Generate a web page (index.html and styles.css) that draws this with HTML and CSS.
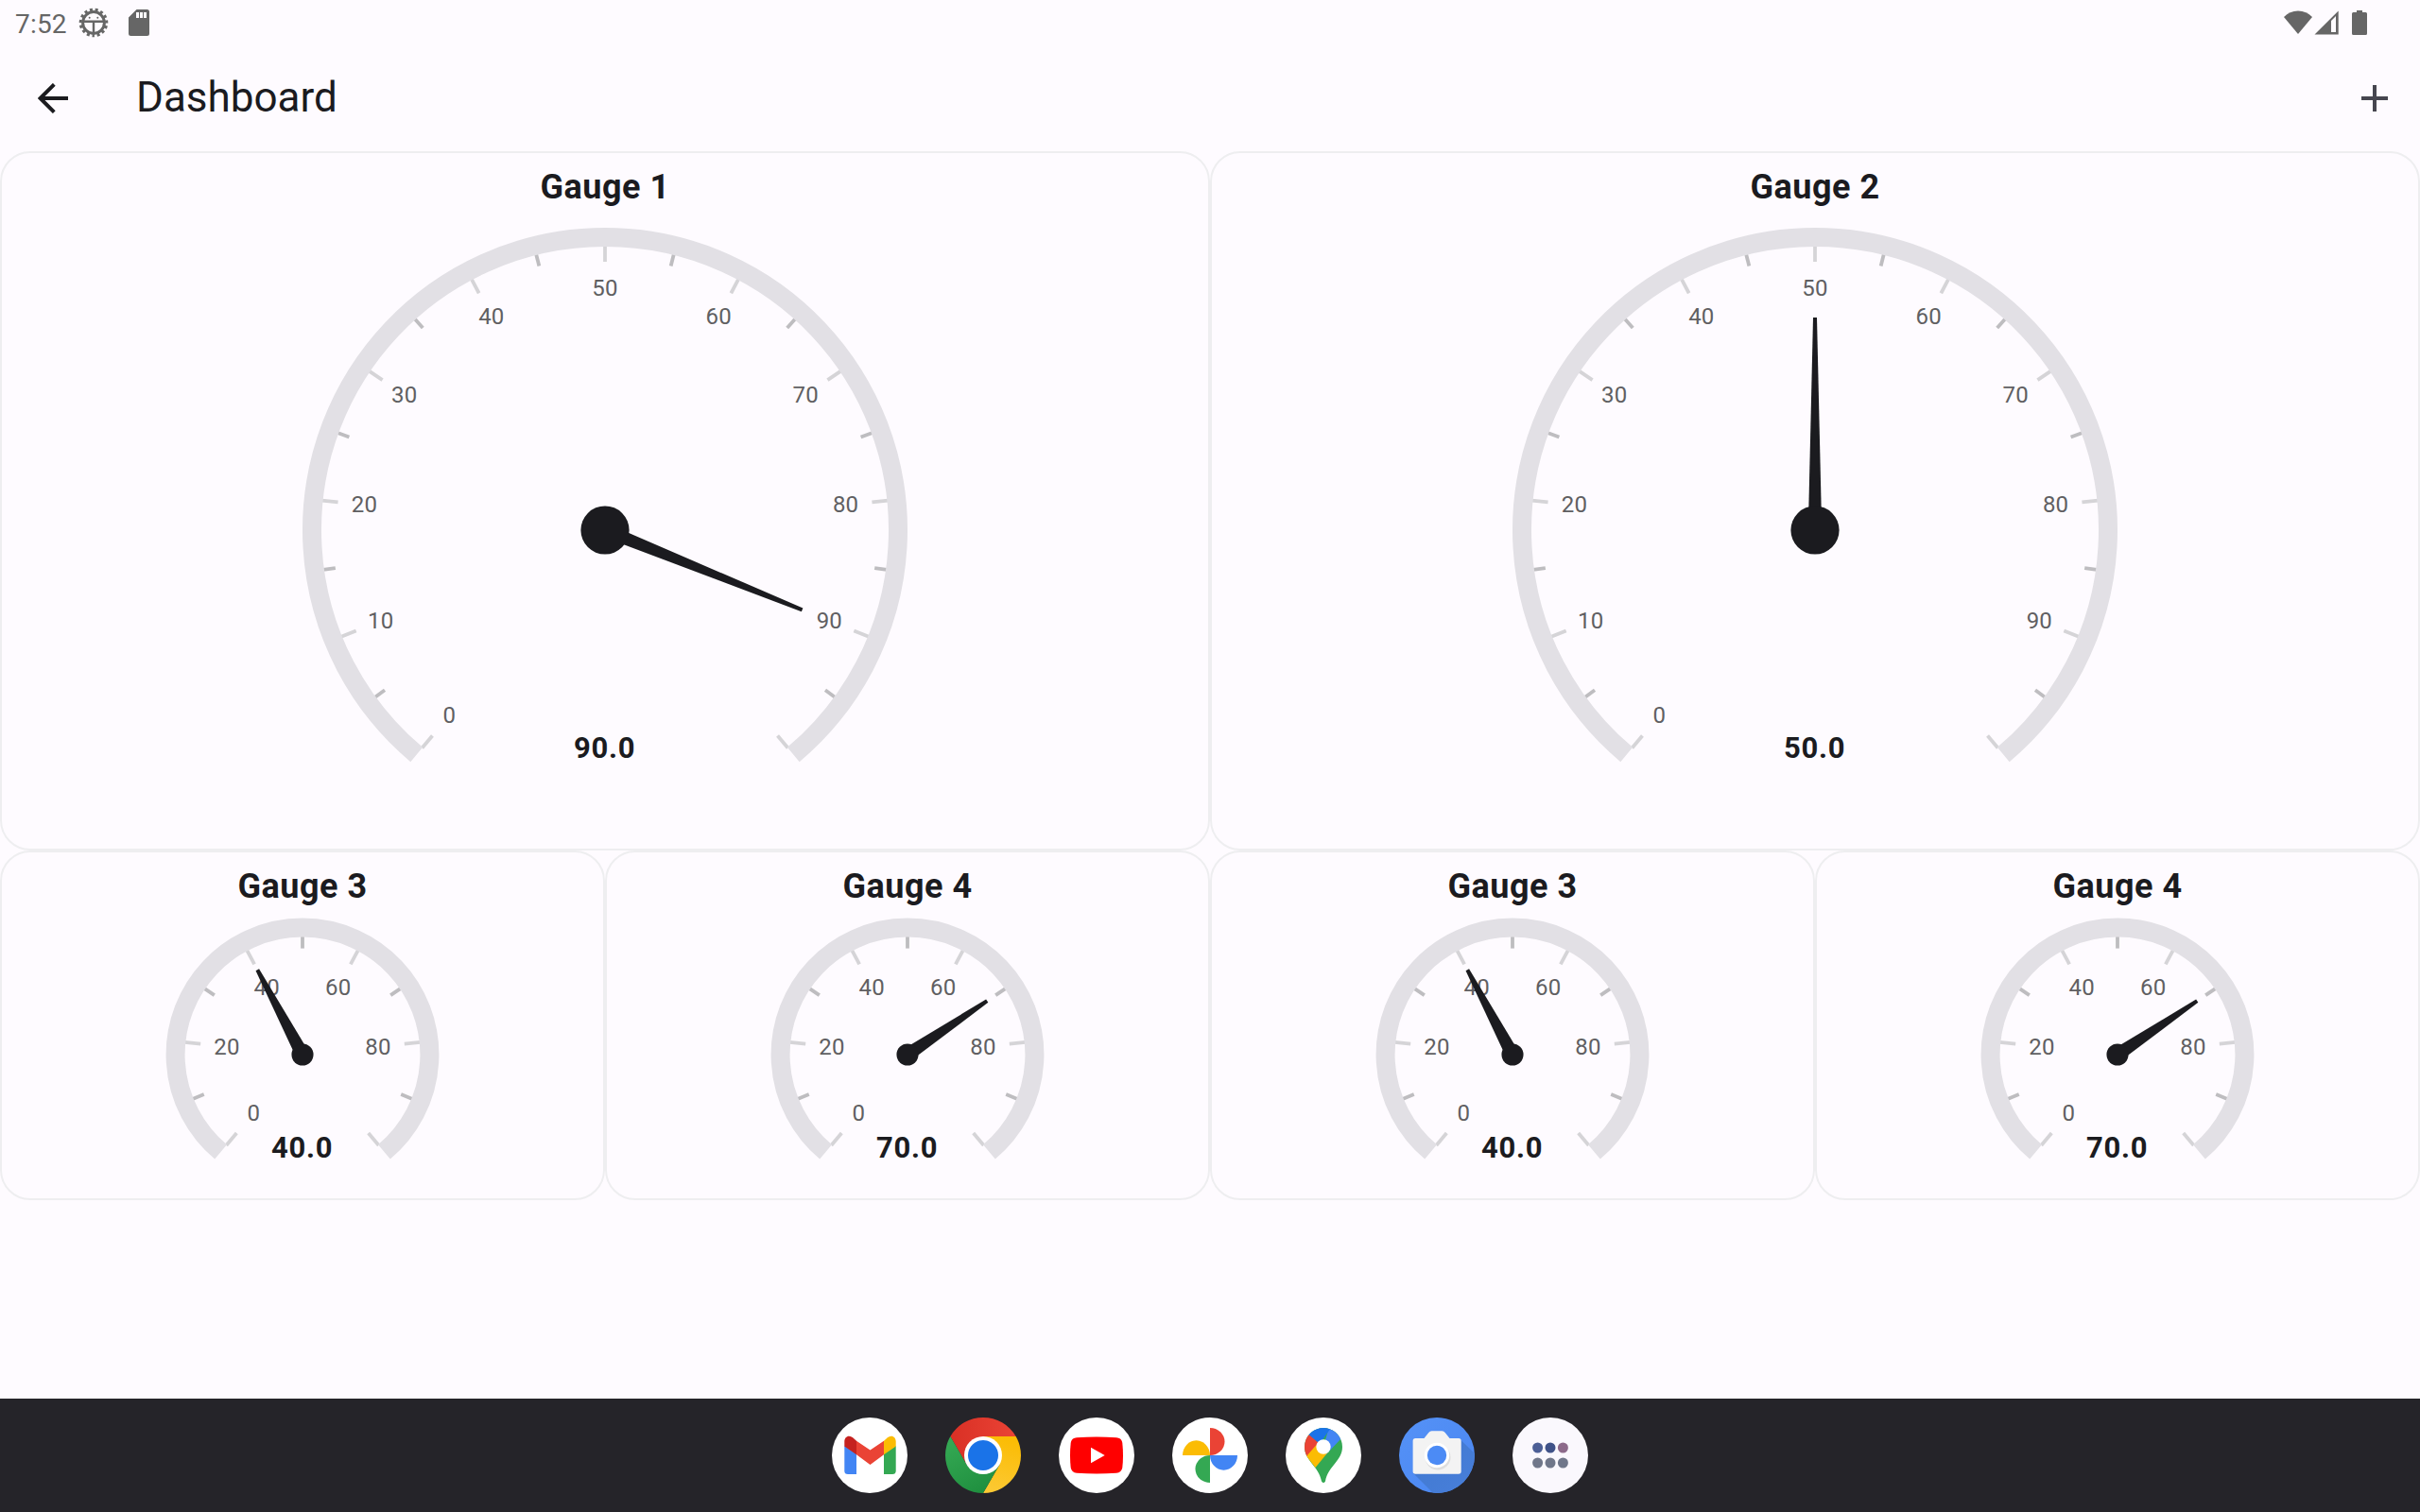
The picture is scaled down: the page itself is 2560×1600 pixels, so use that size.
FILE: index.html
```
<!DOCTYPE html>
<html lang="en">
<head>
<meta charset="utf-8">
<title>Dashboard</title>
<link rel="stylesheet" href="styles.css">
</head>
<body>
<header class="status">
  <span class="clock">7:52</span>
  <svg class="bug" width="32" height="32" viewBox="-16 -16 32 32">
    <circle r="11.4" fill="none" stroke="#666" stroke-width="3"/>
    <circle r="13.800" fill="none" stroke="#666" stroke-width="3" stroke-dasharray="3 2.781" stroke-dashoffset="1.5" transform="rotate(90)"/>
    <path d="M-11-1.200H11M0-1V11" stroke="#666" stroke-width="2.400"/>
    <circle cx="-4.300" cy="-5.300" r="1" fill="#666"/><circle cx="4.300" cy="-5.300" r="1" fill="#666"/>
  </svg>
  <svg class="sd" width="22" height="28" viewBox="0 0 22 28"><path fill="#666" fill-rule="evenodd" d="M8.500 0H19.500A2.500 2.500 0 0 1 22 2.500V25.500A2.500 2.500 0 0 1 19.500 28H2.500A2.500 2.500 0 0 1 0 25.500V8.500ZM8 3V9H11V3ZM12 3V9H15V3ZM16 3V9H19V3Z"/></svg>
  <div class="signals">
    <svg width="30" height="26" viewBox="0 0 30 26"><path fill="#666" d="M0 7Q6 .5 15 .5T30 7L15 25Z"/></svg>
    <svg class="cell" width="26" height="26" viewBox="0 0 26 26"><path fill="#666" fill-rule="evenodd" d="M.5 25.500L25.700.500V25.500ZM18 11V23H23V6Z"/></svg>
    <svg class="battery" width="16" height="26" viewBox="0 0 16 26"><path fill="#666" d="M5 0H11V2H14.500Q16 2 16 3.500V24.500Q16 26 14.500 26H1.500Q0 26 0 24.500V3.500Q0 2 1.500 2H5Z"/></svg>
  </div>
</header>
<nav class="appbar">
  <svg width="32" height="32" viewBox="0 0 32 32"><path fill="none" stroke="#1b1b1f" stroke-width="3.9" d="M32 16H3M17.300 1.300L2.600 16L17.300 30.700"/></svg>
  <h1>Dashboard</h1>
  <svg class="add" width="28" height="28" viewBox="0 0 28 28"><path stroke="#46464f" stroke-width="4" d="M0 14H28M14 0V28"/></svg>
</nav>
<main class="grid">
  <section class="card large" data-value="90"><h2>Gauge 1</h2></section>
  <section class="card large" data-value="50"><h2>Gauge 2</h2></section>
  <section class="card" data-value="40"><h2>Gauge 3</h2></section>
  <section class="card" data-value="70"><h2>Gauge 4</h2></section>
  <section class="card" data-value="40"><h2>Gauge 3</h2></section>
  <section class="card" data-value="70"><h2>Gauge 4</h2></section>
</main>
<footer class="taskbar">
  <svg viewBox="0 0 80 80"><circle cx="40" cy="40" r="40" fill="#fff"/>
    <path fill="#4285f4" d="M13.300 30L26 38V60H17Q13.300 60 13.300 56.500Z"/>
    <path fill="#34a853" d="M67.700 30L55 38V60H64Q67.700 60 67.700 56.500Z"/>
    <path fill="#ea4335" d="M26 24.800L40.500 34.500L55 24.800V39.300L40.500 50L26 39.300Z"/>
    <path fill="#c5221f" d="M26 24.800V39.300L13.300 30.500V25.500C13.300 19.500 19 17.500 23.500 22.500Z"/>
    <path fill="#fbbc04" d="M55 24.800V39.300L67.700 30.500V25.500C67.700 19.500 62 17.500 57.500 22.500Z"/></svg>
  <svg viewBox="0 0 80 80">
    <defs>
      <linearGradient id="red"><stop stop-color="#d93025"/><stop offset="1" stop-color="#ea4335"/></linearGradient>
      <linearGradient id="green" x1=".3" y1="0" x2=".8" y2="1"><stop stop-color="#34a853"/><stop offset="1" stop-color="#1e8e3e"/></linearGradient>
      <linearGradient id="yellow" x1=".5" y1="0" x2=".3" y2="1"><stop stop-color="#fbbc04"/><stop offset="1" stop-color="#fcc934"/></linearGradient>
    </defs>
    <path fill="url(#red)" d="M5.360 20A40 40 0 0 1 74.640 20L40 20L40 40L22.700 50Z"/>
    <path fill="url(#yellow)" d="M74.640 20A40 40 0 0 1 40 80L57.300 50L40 40V20Z"/>
    <path fill="url(#green)" d="M5.360 20A40 40 0 0 0 40 80L57.300 50L40 40L22.700 50Z"/>
    <circle cx="40" cy="40" r="20" fill="#fff"/><circle cx="40" cy="40" r="16" fill="#1a73e8"/></svg>
  <svg viewBox="0 0 80 80"><circle cx="40" cy="40" r="40" fill="#fff"/>
    <path fill="#f00" d="M19 21.300Q40 19.800 61 21.300Q66.500 21.700 67.300 27Q68.700 40 67.300 53Q66.500 58.300 61 58.800Q40 60.200 19 58.800Q13.500 58.300 12.700 53Q11.300 40 12.700 27Q13.500 21.700 19 21.300Z"/>
    <path fill="#fff" d="M34 31.700V48.300L48.700 40Z"/></svg>
  <svg viewBox="0 0 80 80"><circle cx="40" cy="40" r="40" fill="#fff"/>
    <path fill="#ea4335" d="M40 11A15.500 14.500 0 0 1 40 40Z"/>
    <path fill="#4285f4" d="M40 40H69A14.500 15.700 0 0 1 40 40Z"/>
    <path fill="#34a853" d="M40 40V69A15.500 14.500 0 0 1 40 40Z"/>
    <path fill="#fbbc04" d="M40 40H11A14.500 15.700 0 0 1 40 40Z"/></svg>
  <svg viewBox="0 0 80 80"><circle cx="40" cy="40" r="40" fill="#fff"/>
    <clipPath id="pin"><path d="M40 11C51 11 60 20 60 31C60 46 45 51 42 67.500Q40 70.500 38 67.500C35 51 20 46 20 31C20 20 29 11 40 11Z"/></clipPath>
    <g clip-path="url(#pin)"><rect width="80" height="80" fill="#34a853"/>
      <path fill="#4285f4" d="M46 10L40 31L42 40L60 21V8Z"/>
      <path fill="#1a73e8" d="M20 14L25 19L36 28L50 8H25Z"/>
      <path fill="#ea4335" d="M25 18.500L36 28L21.500 42H15V20Z"/>
      <path fill="#fbbc04" d="M22 41L36 25L45 36.500L31.500 53Z"/></g>
    <circle cx="40" cy="31" r="7.700" fill="#fff"/></svg>
  <svg viewBox="0 0 80 80">
    <defs><linearGradient id="cam" x2="1" y2="1"><stop stop-color="#5592f7"/><stop offset="1" stop-color="#4a86f0"/></linearGradient>
    <linearGradient id="shade" x2="1" y2="1"><stop stop-color="#4179cf"/><stop offset="1" stop-color="#487fdb"/></linearGradient></defs>
    <clipPath id="disc"><circle cx="40" cy="40" r="40"/></clipPath>
    <g clip-path="url(#disc)"><rect width="80" height="80" fill="url(#cam)"/><path fill="url(#shade)" d="M64.500 23L84 42V84H40L15 59L40 40Z"/></g>
    <path fill="#f3f3f3" d="M31.300 16Q32.600 14.300 34.500 14.300H45.500Q47.400 14.300 48.700 16L53.500 22H63Q65.700 22 65.700 24.700V57Q65.700 59.700 63 59.700H17.300Q14.600 59.700 14.600 57V24.700Q14.600 22 17.300 22H26.500Z"/>
    <circle cx="41" cy="42" r="13.500" fill="#dedede"/><circle cx="40" cy="40" r="13.200" fill="#fff"/><circle cx="40" cy="40" r="10.200" fill="#4c8bf5"/></svg>
  <svg viewBox="0 0 80 80"><circle cx="40" cy="40" r="40" fill="#faf8fd"/>
    <circle cx="26.600" cy="32" r="5.500" fill="#4c5f96"/><circle cx="40" cy="32" r="5.500" fill="#3f5288"/><circle cx="53.400" cy="32" r="5.500" fill="#8c6a8a"/>
    <g fill="#70778a"><circle cx="26.600" cy="48" r="5.500"/><circle cx="40" cy="48" r="5.500"/><circle cx="53.400" cy="48" r="5.500"/></g></svg>
</footer>
<script src="gauges.js"></script>
</body>
</html>
```
FILE: styles.css
```
* { box-sizing: border-box; }
body { margin: 0; width: 2560px; height: 1600px; display: flex; flex-direction: column; overflow: hidden; background: #fefbff; color: #1b1b1f; font-family: Roboto, sans-serif; }
svg { display: block; flex: none; }
.status { height: 50px; display: flex; align-items: center; padding: 0 56px 2px 16px; }
.clock { width: 67px; font-size: 28px; line-height: 32px; letter-spacing: .2px; color: #666; padding-top: 3px; }
.sd { margin-left: 21px; }
.signals { margin-left: auto; display: flex; }
.cell { margin-left: 2px; }
.battery { margin-left: 14px; }
.appbar { height: 110px; display: flex; align-items: center; padding: 0 34px 2px 40px; }
.appbar h1 { margin: 0 auto 2px 72px; font-size: 44px; font-weight: 400; line-height: 56px; }
.grid { display: grid; grid-template-columns: repeat(4, 640px); grid-template-rows: 740px 370px; flex: 1; }
.card { border: 2px solid #eeeef0; border-radius: 32px; display: flex; flex-direction: column; align-items: center; }
.large { grid-column: span 2; }
.card h2 { margin: 12px 0 0; font-size: 36px; font-weight: 700; line-height: 48px; letter-spacing: .5px; }
.gauge text { font-size: 24px; fill: #605f62; text-anchor: middle; letter-spacing: .2px; }
.gauge .value { font-size: 31px; font-weight: 700; fill: #1b1b1f; letter-spacing: .7px; }
.taskbar { height: 120px; background: #252429; display: flex; align-items: center; justify-content: center; gap: 40px; }
.taskbar svg { width: 80px; height: 80px; }
```
FILE: gauges.js
```
document.querySelectorAll('.card').forEach(card => {
  const large = card.classList.contains('large');
  const value = +card.dataset.value;
  const R = large ? 320 : 144.4;
  const cy = large ? 339 : 154;
  const w = large ? 660 : 300;
  const h = large ? 660 : 300;
  const rim = R - 20;
  const angle = v => (v * 2.8 - 140) * Math.PI / 180;
  const at = (v, r) => [r * Math.sin(angle(v)), -r * Math.cos(angle(v))];
  const [x0, y0] = at(0, R - 10), [x1, y1] = at(100, R - 10);
  let s = '';
  const major = large ? 10 : 20;
  for (let v = 0; v <= 100; v += major / 2) {
    const isMajor = v % major === 0;
    const [ax, ay] = at(v, rim + 1), [bx, by] = at(v, rim - (isMajor ? 16 : 12));
    s += `<path d="M${ax} ${ay}L${bx} ${by}" stroke="${isMajor ? '#d5d4d7' : '#bebdc0'}" stroke-width="3.8"/>`;
    if (isMajor && v < 100) {
      const [tx, ty] = at(v, R - 64);
      s += `<text x="${tx}" y="${ty + (large ? 7.9 : 8.3)}">${v}</text>`;
    }
  }
  s += `<path d="M${x0} ${y0}A${R - 10} ${R - 10} 0 1 1 ${x1} ${y1}" fill="none" stroke="#e2e0e5" stroke-width="20"/>`;
  const len = large ? 225 : 101.6;
  s += `<path d="M-7.2 0L-2 ${-len}H2L7.2 0Z" fill="#1b1b1f" transform="rotate(${value * 2.8 - 140})"/>`;
  s += `<circle r="${R * 0.08}" fill="#1b1b1f"/>`;
  s += `<text class="value" x="-0.4" y="${large ? 240.8 : 108.6}">${value.toFixed(1)}</text>`;
  card.insertAdjacentHTML('beforeend', `<svg class="gauge" width="${w}" height="${h}" viewBox="${-w / 2} ${-cy} ${w} ${h}">${s}</svg>`);
});
```
